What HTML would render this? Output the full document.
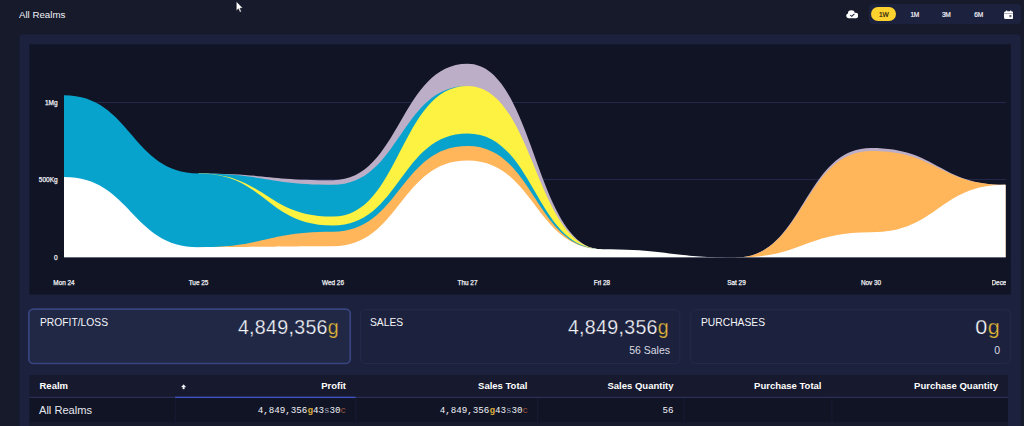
<!DOCTYPE html>
<html><head><meta charset="utf-8"><title>All Realms</title>
<style>
*{box-sizing:border-box;margin:0;padding:0}
html,body{width:1024px;height:426px;overflow:hidden;background:#161a2b}
body{position:relative;font-family:"Liberation Sans",sans-serif;color:#fff}
.abs{position:absolute}
#title{left:19px;top:9px;font-size:9.7px;line-height:12px;color:#f2f3f7;white-space:nowrap}
#tg{left:869px;top:3.7px;width:151.8px;height:20.6px;background:#1c213d;border-radius:4px}
#w1{left:871.2px;top:7.45px;width:25px;height:14px;border-radius:7px;background:#fdd22f;color:#2a2410}
.tb{position:absolute;top:7.5px;height:13.5px;line-height:13.5px;font-size:6.6px;-webkit-text-stroke:0.2px currentColor;text-align:center;width:24px;color:#eef0f6;letter-spacing:-0.2px}
.gl{position:absolute;left:64px;width:942px;height:1px;background:#23284a}
.yl{position:absolute;width:40px;left:17.6px;text-align:right;font-size:6.5px;line-height:8px;-webkit-text-stroke:0.25px #f0f1f5;color:#f0f1f5;white-space:nowrap}
.xl{position:absolute;top:278.6px;width:60px;text-align:center;font-size:6.4px;line-height:8px;-webkit-text-stroke:0.25px #f0f1f5;color:#f0f1f5;white-space:nowrap}
.ct{position:absolute;top:317px;font-size:10.3px;letter-spacing:0;line-height:12px;color:#f4f5f9;white-space:nowrap}
.cv{position:absolute;top:314.5px;font-size:19.6px;letter-spacing:0.3px;line-height:24px;color:#f4f5f9;white-space:nowrap;text-align:right;-webkit-text-stroke:0.25px #1c213d}
.cv b{font-weight:normal;color:#e3b838}
.cs{position:absolute;top:343.5px;font-size:10.5px;line-height:13px;color:#d9dbe4;white-space:nowrap;text-align:right}
.h{position:absolute;top:380px;font-size:9.5px;line-height:12px;font-weight:bold;color:#fff;white-space:nowrap;text-align:right}
.m{position:absolute;top:405px;font-family:"Liberation Mono",monospace;font-size:9.2px;line-height:12px;color:#f0f1f6;white-space:nowrap;text-align:right}
.m .g{color:#dcab3a;font-weight:bold}.m .s{color:#9ea2b4}.m .c{color:#9a5442}
</style></head><body>
<div class="abs" id="title">All Realms</div>
<svg class="abs" style="left:235.3px;top:1.1px" width="9.4" height="12.6" viewBox="0 0 10 15"><path d="M1,0.5 L1,11.5 L3.5,9.3 L5.3,13.3 L7,12.6 L5.3,8.7 L8.6,8.4 Z" fill="#fff" stroke="#0b0d18" stroke-width="0.5"/></svg>
<svg class="abs" style="left:845.9px;top:10px" width="12.4" height="8.5" viewBox="0 0 26 19" preserveAspectRatio="none"><g fill="#fff"><circle cx="6" cy="13" r="5.4"/><circle cx="11.2" cy="8" r="7.2"/><circle cx="19.8" cy="12.4" r="6"/><rect x="6" y="10" width="14" height="8.4"/></g><path d="M9,11.6 L12,14.4 L17.6,8.6" fill="none" stroke="#1c2038" stroke-width="2.1"/></svg>
<div class="abs" id="tg"></div>
<div class="abs" id="w1"></div>
<div class="tb" style="left:871.7px;color:#2a2410">1W</div>
<div class="tb" style="left:902.8px">1M</div>
<div class="tb" style="left:934.3px">3M</div>
<div class="tb" style="left:966.7px">6M</div>
<svg class="abs" style="left:1003.6px;top:9.8px" width="9.3" height="9.3" viewBox="0 0 20 20"><path d="M4.5,1 h2.4 v1.6 h6.2 v-1.6 h2.4 v1.6 h0.5 a4,4 0 0 1 4,4 v9 a4,4 0 0 1 -4,4 h-12 a4,4 0 0 1 -4,-4 v-9 a4,4 0 0 1 4,-4 h0.5 Z" fill="#fff"/><rect x="0.5" y="6.6" width="19" height="1.3" fill="#7b7f94"/><rect x="11.6" y="11" width="4.4" height="4.4" rx="0.8" fill="#5a5e78"/></svg>
<svg class="abs" style="left:0;top:30px" width="1024" height="396" viewBox="0 30 1024 396"><rect x="19.5" y="34.3" width="1001.2" height="420" rx="4" fill="#1c213d"/><rect x="29.4" y="44.3" width="981.4" height="250.2" fill="#111424"/></svg>
<div class="gl" style="top:101.8px"></div>
<div class="gl" style="top:179.2px"></div>
<div class="yl" style="top:98.75px">1Mg</div>
<div class="yl" style="top:175.75px">500Kg</div>
<div class="yl" style="top:253.75px">0</div>
<svg class="abs" style="left:0;top:0" width="1024" height="300" viewBox="0 0 1024 300">
<defs><clipPath id="cp"><rect x="64" y="44" width="942" height="215"/></clipPath></defs>
<g clip-path="url(#cp)">
<path d="M198.50,173.40 C265.75,173.40 265.75,180.20 333.00,180.20 C400.25,180.20 400.25,63.80 467.50,63.80 C534.75,63.80 534.75,249.20 602.00,249.20 L602.00,258.50 L198.50,258.50 Z M736.50,257.50 C803.75,257.50 803.75,148.00 871.00,148.00 C938.25,148.00 938.25,184.80 1005.50,184.80 L1005.50,258.50 L736.50,258.50 Z " fill="#bcaec6"/>
<path d="M198.50,173.40 C265.75,173.40 265.75,184.70 333.00,184.70 C400.25,184.70 400.25,85.90 467.50,85.90 L467.50,258.50 L198.50,258.50 Z " fill="#08a3cd"/>
<path d="M198.50,173.40 C265.75,173.40 265.75,216.60 333.00,216.60 C400.25,216.60 400.25,85.90 467.50,85.90 C534.75,85.90 534.75,249.20 602.00,249.20 L602.00,258.50 L198.50,258.50 Z " fill="#fdf141"/>
<path d="M64.00,95.20 C131.25,95.20 131.25,173.40 198.50,173.40 C265.75,173.40 265.75,225.40 333.00,225.40 C400.25,225.40 400.25,133.40 467.50,133.40 C534.75,133.40 534.75,249.20 602.00,249.20 L602.00,258.50 L64.00,258.50 Z " fill="#08a3cd"/>
<path d="M198.50,247.20 C265.75,247.20 265.75,231.70 333.00,231.70 C400.25,231.70 400.25,146.00 467.50,146.00 C534.75,146.00 534.75,249.20 602.00,249.20 L602.00,258.50 L198.50,258.50 Z M736.50,257.50 C803.75,257.50 803.75,151.00 871.00,151.00 C938.25,151.00 938.25,184.80 1005.50,184.80 L1005.50,258.50 L736.50,258.50 Z " fill="#ffb55a"/>
<path d="M64.00,176.90 C131.25,176.90 131.25,247.20 198.50,247.20 C265.75,247.20 265.75,246.20 333.00,246.20 C400.25,246.20 400.25,160.50 467.50,160.50 C534.75,160.50 534.75,249.20 602.00,249.20 C669.25,249.20 669.25,257.50 736.50,257.50 C803.75,257.50 803.75,232.30 871.00,232.30 C938.25,232.30 938.25,184.80 1005.50,184.80 L1005.50,258.50 L64.00,258.50 Z " fill="#ffffff"/>
</g><rect x="60" y="257.6" width="950" height="3" fill="#111425"/><rect x="64" y="257.2" width="942" height="0.8" fill="#23284a" opacity="0.6"/></svg>
<div class="xl" style="left:34.0px">Mon 24</div>
<div class="xl" style="left:168.5px">Tue 25</div>
<div class="xl" style="left:303.0px">Wed 26</div>
<div class="xl" style="left:437.5px">Thu 27</div>
<div class="xl" style="left:572.0px">Fri 28</div>
<div class="xl" style="left:706.5px">Sat 29</div>
<div class="xl" style="left:841.0px">Nov 30</div>
<div class="xl" style="left:991.5px;width:14.5px;text-align:left;overflow:hidden">December</div>

<svg class="abs" style="left:0;top:300px" width="1024" height="70" viewBox="0 300 1024 70">
<rect x="28.85" y="309.1" width="321.35" height="54.4" rx="4.5" fill="#212846" stroke="#38447f" stroke-width="1.7"/>
<rect x="360.4" y="309.8" width="319.4" height="53.6" rx="4.5" fill="#1c213d" stroke="#252a4c" stroke-width="1"/>
<rect x="690.8" y="309.8" width="319.5" height="53.6" rx="4.5" fill="#1c213d" stroke="#252a4c" stroke-width="1"/>
</svg>
<div class="ct" style="left:40px">PROFIT/LOSS</div>
<div class="ct" style="left:370px">SALES</div>
<div class="ct" style="left:701px">PURCHASES</div>
<div class="cv" style="left:189px;width:150px;-webkit-text-stroke-color:#212846">4,849,356<b>g</b></div>
<div class="cv" style="left:519px;width:150px">4,849,356<b>g</b></div>
<div class="cv" style="left:849.5px;width:150px;transform:scaleX(1.1);transform-origin:100% 50%">0<b>g</b></div>
<div class="cs" style="left:570px;width:100px">56 Sales</div>
<div class="cs" style="left:900px;width:100px">0</div>
<svg class="abs" style="left:0;top:370px" width="1024" height="56" viewBox="0 370 1024 56">
<rect x="29.4" y="375" width="978.6" height="22.5" fill="#171a2e"/>
<rect x="29.4" y="397.5" width="978.6" height="25" fill="#111425"/>
<rect x="29.4" y="422.5" width="978.6" height="4" fill="#171a2d"/>
<rect x="29.4" y="396.8" width="978.6" height="1.2" fill="#2a3055"/>
<rect x="174.3" y="396.8" width="0.7" height="1.2" fill="#171a2e"/>
<rect x="174.9" y="396.7" width="180.6" height="1.35" fill="#3f52bd"/>
<g fill="#181c34"><rect x="174.7" y="398" width="1" height="24.5"/><rect x="355.3" y="398" width="1" height="24.5"/><rect x="537.2" y="398" width="1" height="24.5"/><rect x="683.4" y="398" width="1" height="24.5"/><rect x="831.4" y="398" width="1" height="24.5"/></g>
</svg>
<div class="h" style="left:39.5px;text-align:left">Realm</div>
<svg class="abs" style="left:178px;top:382px" width="12" height="10" viewBox="178 382 12 10"><path d="M181.4,387 L183.6,384.6 L185.8,387 L184.4,387 L184.4,389 L182.8,389 L182.8,387 Z" fill="#f4f4f8" stroke="#f4f4f8" stroke-width="0.3" stroke-linejoin="round"/></svg>
<div class="h" style="left:246px;width:100px">Profit</div>
<div class="h" style="left:427.5px;width:100px">Sales Total</div>
<div class="h" style="left:573.5px;width:100px">Sales Quantity</div>
<div class="h" style="left:721.5px;width:100px">Purchase Total</div>
<div class="h" style="left:878px;width:120px">Purchase Quantity</div>
<div class="abs" style="left:39px;top:403.5px;font-size:11.1px;line-height:13px;color:#e6e8ef;white-space:nowrap">All Realms</div>
<div class="m" style="left:196px;width:150px">4,849,356<span class="g">g</span>43<span class="s">s</span>30<span class="c">c</span></div>
<div class="m" style="left:378px;width:150px">4,849,356<span class="g">g</span>43<span class="s">s</span>30<span class="c">c</span></div>
<div class="m" style="left:573.5px;width:100px">56</div>
</body></html>
